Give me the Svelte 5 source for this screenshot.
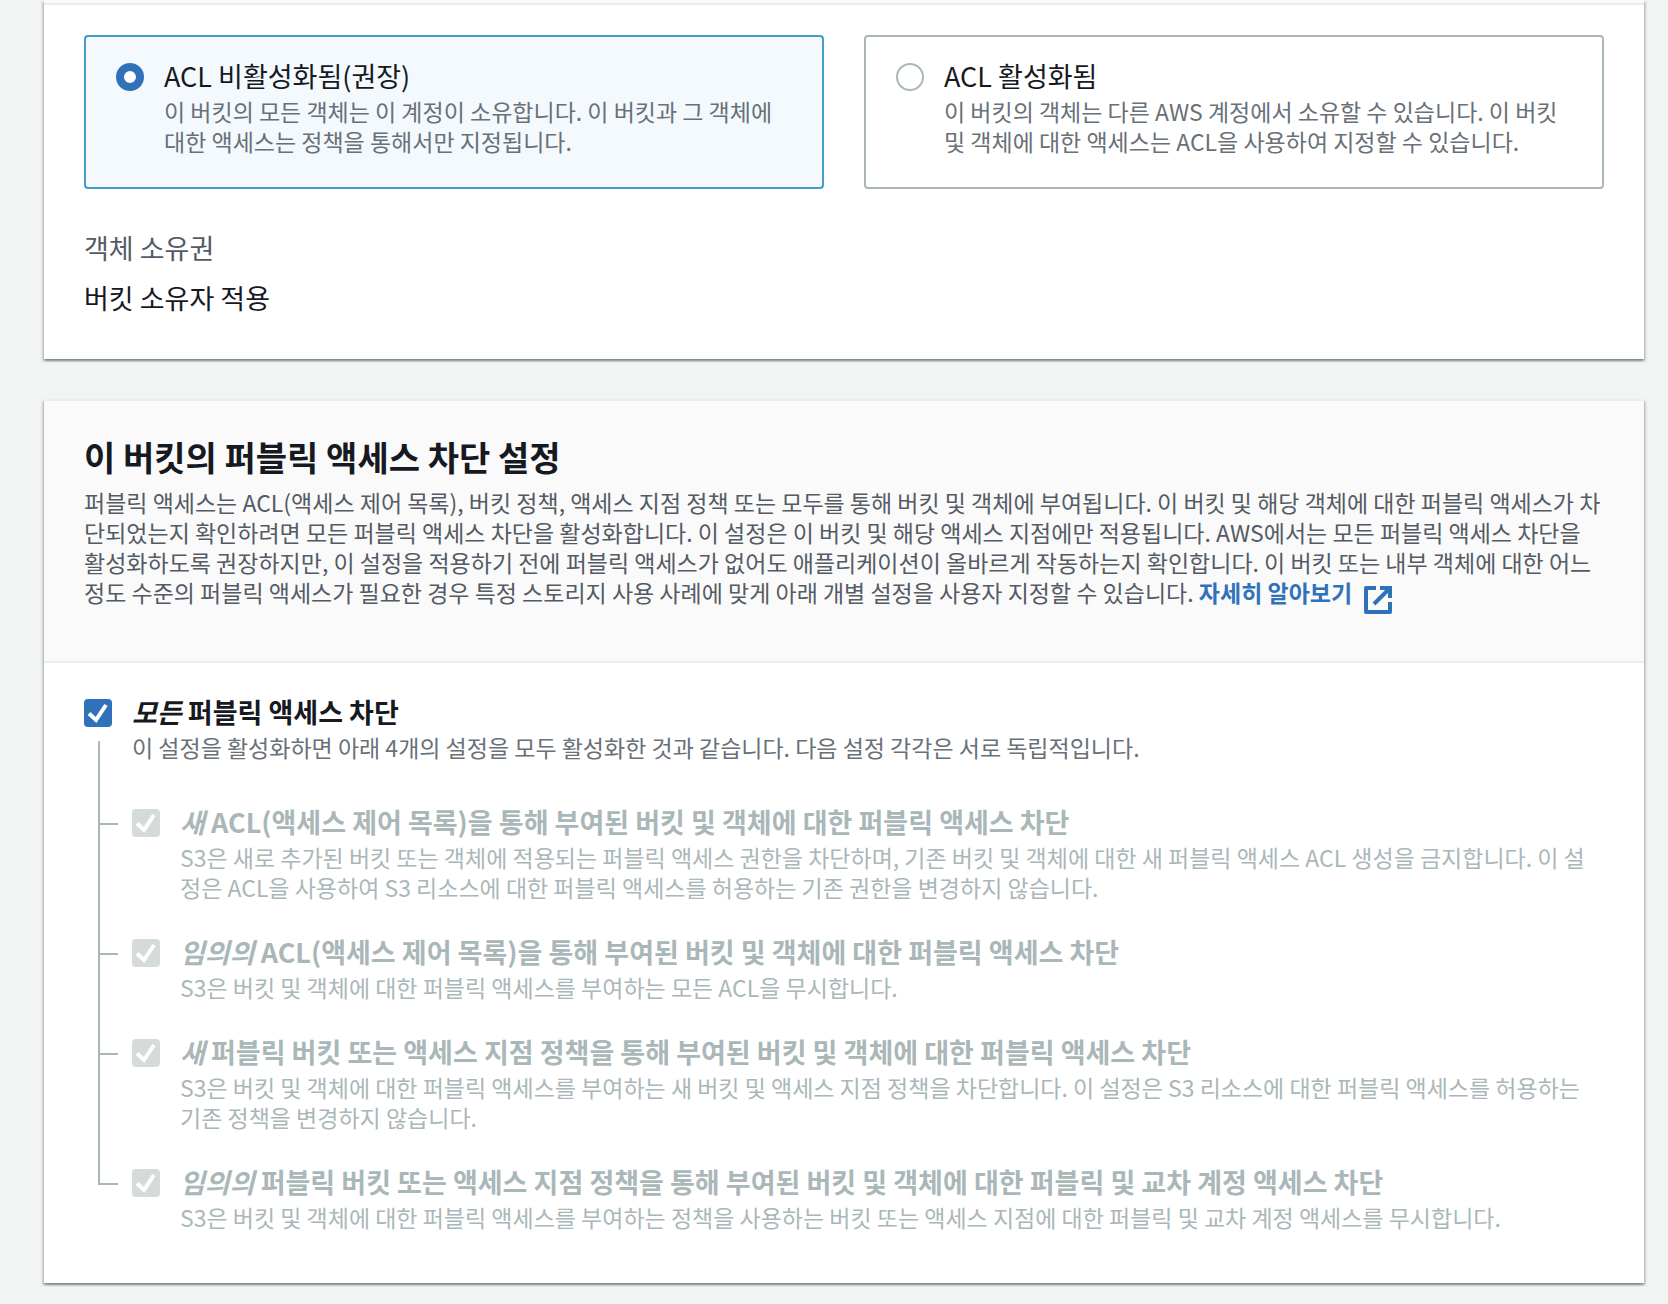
<script>
  let ownership = $state('disabled');
  let blockAll = $state(true);

  const tiles = [
    {
      value: 'disabled',
      title: 'ACL 비활성화됨(권장)',
      text: '이 버킷의 모든 객체는 이 계정이 소유합니다. 이 버킷과 그 객체에 대한 액세스는 정책을 통해서만 지정됩니다.'
    },
    {
      value: 'enabled',
      title: 'ACL 활성화됨',
      text: '이 버킷의 객체는 다른 AWS 계정에서 소유할 수 있습니다. 이 버킷 및 객체에 대한 액세스는 ACL을 사용하여 지정할 수 있습니다.'
    }
  ];

  const rules = [
    {
      id: 'new-acl',
      scope: '새',
      title: 'ACL(액세스 제어 목록)을 통해 부여된 버킷 및 객체에 대한 퍼블릭 액세스 차단',
      text: 'S3은 새로 추가된 버킷 또는 객체에 적용되는 퍼블릭 액세스 권한을 차단하며, 기존 버킷 및 객체에 대한 새 퍼블릭 액세스 ACL 생성을 금지합니다. 이 설정은 ACL을 사용하여 S3 리소스에 대한 퍼블릭 액세스를 허용하는 기존 권한을 변경하지 않습니다.'
    },
    {
      id: 'any-acl',
      scope: '임의의',
      title: 'ACL(액세스 제어 목록)을 통해 부여된 버킷 및 객체에 대한 퍼블릭 액세스 차단',
      text: 'S3은 버킷 및 객체에 대한 퍼블릭 액세스를 부여하는 모든 ACL을 무시합니다.'
    },
    {
      id: 'new-policy',
      scope: '새',
      title: '퍼블릭 버킷 또는 액세스 지점 정책을 통해 부여된 버킷 및 객체에 대한 퍼블릭 액세스 차단',
      text: 'S3은 버킷 및 객체에 대한 퍼블릭 액세스를 부여하는 새 버킷 및 액세스 지점 정책을 차단합니다. 이 설정은 S3 리소스에 대한 퍼블릭 액세스를 허용하는 기존 정책을 변경하지 않습니다.'
    },
    {
      id: 'any-policy',
      scope: '임의의',
      title: '퍼블릭 버킷 또는 액세스 지점 정책을 통해 부여된 버킷 및 객체에 대한 퍼블릭 및 교차 계정 액세스 차단',
      text: 'S3은 버킷 및 객체에 대한 퍼블릭 액세스를 부여하는 정책을 사용하는 버킷 또는 액세스 지점에 대한 퍼블릭 및 교차 계정 액세스를 무시합니다.'
    }
  ];
</script>

{#snippet checkmark()}
  <svg class="mark" viewBox="0 0 28 28" aria-hidden="true">
    <path d="M5 14.5 12 21 22 6" />
  </svg>
{/snippet}

<main>
  <section class="card">
    <div class="strip"></div>
    <div class="ownership">
      <div class="tiles" role="radiogroup" aria-label="객체 소유권">
        {#each tiles as tile}
          <label class="tile" class:selected={ownership === tile.value}>
            <input type="radio" name="ownership" value={tile.value} bind:group={ownership} />
            <span class="copy">
              <span class="title">{tile.title}</span>
              <span class="text">{tile.text}</span>
            </span>
          </label>
        {/each}
      </div>
      <dl>
        <dt>객체 소유권</dt>
        <dd>버킷 소유자 적용</dd>
      </dl>
    </div>
  </section>

  <section class="card">
    <header>
      <h2>이 버킷의 퍼블릭 액세스 차단 설정</h2>
      <p>
        퍼블릭 액세스는 ACL(액세스 제어 목록), 버킷 정책, 액세스 지점 정책 또는 모두를 통해 버킷 및 객체에 부여됩니다. 이 버킷 및 해당 객체에 대한 퍼블릭 액세스가 차단되었는지 확인하려면 모든 퍼블릭 액세스 차단을 활성화합니다. 이 설정은 이 버킷 및 해당 액세스 지점에만 적용됩니다. AWS에서는 모든 퍼블릭 액세스 차단을 활성화하도록 권장하지만, 이 설정을 적용하기 전에 퍼블릭 액세스가 없어도 애플리케이션이 올바르게 작동하는지 확인합니다. 이 버킷 또는 내부 객체에 대한 어느 정도 수준의 퍼블릭 액세스가 필요한 경우 특정 스토리지 사용 사례에 맞게 아래 개별 설정을 사용자 지정할 수 있습니다.
        <a href="#learn-more">자세히 알아보기<svg class="external" viewBox="0 0 28 28" aria-hidden="true">
            <path d="M12 2H2V26H26V16" stroke-linejoin="round" />
            <path d="M16 2H26V12M25 3 10 18" />
          </svg></a>
      </p>
    </header>

    <div class="settings">
      <div class="option">
        <span class="check">
          <input id="block-all" type="checkbox" bind:checked={blockAll} />
          {@render checkmark()}
        </span>
        <label class="copy" for="block-all">
          <span class="title"><em>모든</em> 퍼블릭 액세스 차단</span>
          <span class="text">이 설정을 활성화하면 아래 4개의 설정을 모두 활성화한 것과 같습니다. 다음 설정 각각은 서로 독립적입니다.</span>
        </label>
      </div>
      <ul>
        {#each rules as rule}
          <li class="option">
            <span class="check">
              <input id={rule.id} type="checkbox" checked={blockAll} disabled={blockAll} />
              {@render checkmark()}
            </span>
            <label class="copy" for={rule.id}>
              <span class="title"><em>{rule.scope}</em> {rule.title}</span>
              <span class="text">{rule.text}</span>
            </label>
          </li>
        {/each}
      </ul>
    </div>
  </section>
</main>

<style>
  :global(body) {
    margin: 0;
    background: #f2f3f3;
  }

  main {
    display: flex;
    flex-direction: column;
    gap: 40px;
    padding: 0 24px 21px 44px;
    color: #16191f;
    font: 23px/30px 'Noto Sans CJK KR', 'Noto Sans', sans-serif;
  }

  .card {
    background: #fff;
    box-shadow:
      0 2px 2px rgba(0, 28, 36, 0.3),
      2px 2px 2px rgba(0, 28, 36, 0.15),
      -2px 2px 2px rgba(0, 28, 36, 0.15);
  }

  .strip {
    height: 3px;
    background: #fafafa;
    border-bottom: 2px solid #eaeded;
  }

  .ownership {
    padding: 30px 40px 41px;
  }

  .tiles {
    display: grid;
    grid-template-columns: 1fr 1fr;
    gap: 40px;
  }

  .tile {
    display: flex;
    gap: 20px;
    padding: 23px 30px 31px;
    border: 2px solid #aab7b8;
    border-radius: 4px;
  }

  .tile.selected {
    border-color: #449dc6;
    background: #f3f9fd;
  }

  input {
    appearance: none;
    flex: none;
    box-sizing: border-box;
    width: 28px;
    height: 28px;
    margin: 3px 0 0;
    border: 2px solid #aab7b8;
    background: #fff;
  }

  input[type='radio'] {
    border-radius: 50%;
  }

  input[type='radio']:checked {
    border: 8px solid #3072b9;
  }

  .copy {
    display: flex;
    flex: 1;
    flex-direction: column;
    gap: 4px;
    min-width: 0;
  }

  .title {
    font-size: 27px;
    line-height: 32px;
  }

  .text {
    color: #687078;
  }

  dl {
    display: flex;
    flex-direction: column;
    gap: 10px;
    margin: 39px 0 0;
    font-size: 27px;
    line-height: 40px;
  }

  dt {
    color: #545b64;
  }

  dd {
    margin: 0;
  }

  header {
    padding: 34px 40px 54px;
    border-top: 2px solid #eaeded;
    border-bottom: 2px solid #eaeded;
    background: #fafafa;
  }

  h2 {
    margin: 0 0 8px;
    font-size: 34px;
    line-height: 44px;
  }

  p {
    margin: 0;
    color: #545b64;
  }

  a {
    color: #3072b9;
    font-weight: 700;
    text-decoration: none;
    white-space: nowrap;
  }

  .external {
    width: 28px;
    height: 28px;
    margin: -10px 0 -10px 12px;
    vertical-align: -2px;
    fill: none;
    stroke: currentColor;
    stroke-width: 4;
  }

  .settings {
    padding: 33px 40px 51px;
  }

  .option {
    display: flex;
    gap: 20px;
  }

  .option .title {
    font-weight: 700;
  }

  .check {
    display: grid;
    align-self: flex-start;
  }

  .check > :global(*) {
    grid-area: 1 / 1;
  }

  .check input {
    border-radius: 4px;
  }

  .check input:checked {
    border: 0;
    background: #3072b9;
  }

  .check input:disabled {
    background: #d5dbdb;
  }

  .mark {
    width: 28px;
    height: 28px;
    margin-top: 3px;
    fill: none;
    stroke: #fff;
    stroke-width: 4;
    pointer-events: none;
  }

  ul {
    margin: 0;
    padding: 10px 0 0;
    list-style: none;
  }

  li {
    position: relative;
    padding: 34px 0 0 48px;
  }

  li .title,
  li .text {
    color: #aab7b8;
  }

  li::before {
    content: '';
    position: absolute;
    top: 0;
    bottom: 0;
    left: 14px;
    width: 2px;
    background: #aab7b8;
  }

  li:first-child::before {
    top: -31px;
  }

  li:last-child::before {
    bottom: auto;
    height: 53px;
  }

  li::after {
    content: '';
    position: absolute;
    top: 51px;
    left: 14px;
    width: 20px;
    height: 2px;
    background: #aab7b8;
  }
</style>
